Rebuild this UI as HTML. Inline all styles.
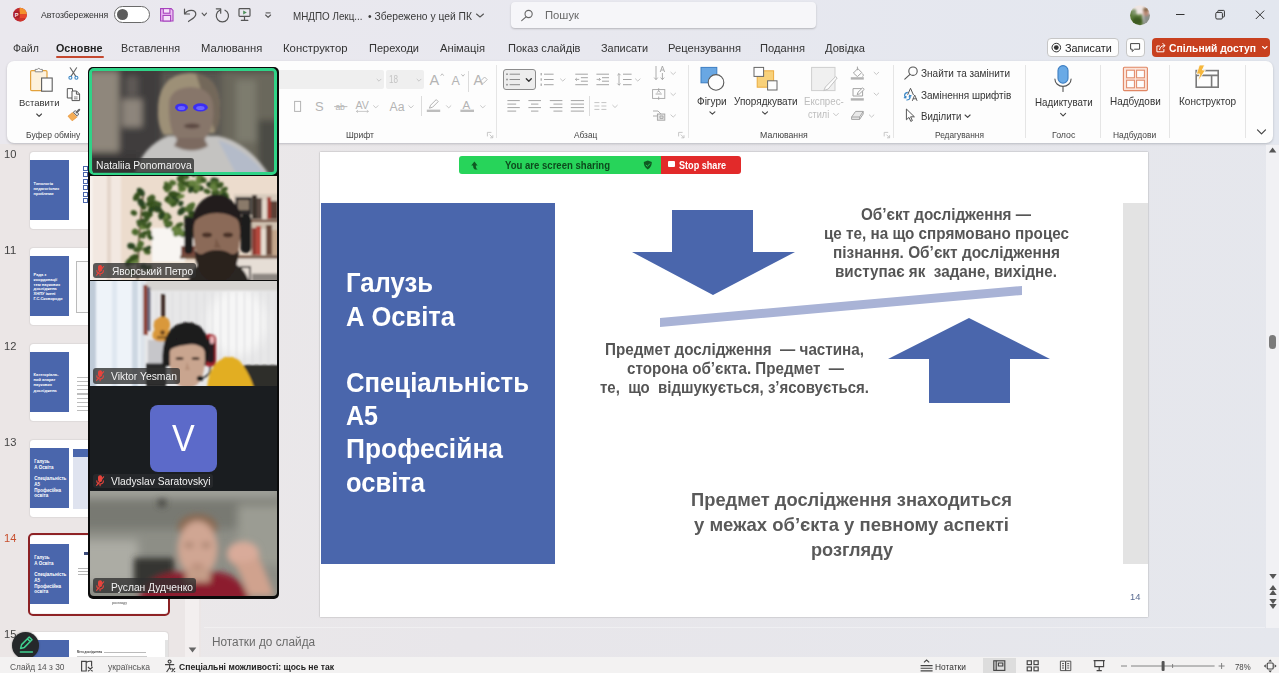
<!DOCTYPE html>
<html lang="uk"><head><meta charset="utf-8"><title>PowerPoint</title>
<style>
html,body{margin:0;padding:0}
body{width:1279px;height:673px;overflow:hidden;position:relative;background:#e9e8ee;font-family:"Liberation Sans",sans-serif}
.a{position:absolute}
.t{position:absolute;white-space:nowrap;transform-origin:0 50%;display:block}
svg{position:absolute;overflow:visible}
</style></head><body>

<div class="a" style="left:0px;top:0px;width:1279px;height:145px;background:linear-gradient(90deg,#eae8ee 0%,#e8e8ef 45%,#e3e7ef 100%);"></div>
<div class="a" style="left:0px;top:144px;width:204px;height:514px;background:#ebe6e6;"></div>
<div class="a" style="left:200.6px;top:144px;width:1078.4px;height:514px;background:linear-gradient(100deg,#ebe8e9 0%,#e8e6ea 30%,#e5e7ed 100%);"></div>
<div class="a" style="left:7.3px;top:60.7px;width:1265.8px;height:82.4px;background:#fdfdfd;border-radius:7px;box-shadow:0 1px 2.5px rgba(0,0,0,.2)"></div>
<span class="t" id="t0" style="left:40.6px;top:9.3px;font-size:9.5px;line-height:12px;color:#303030;font-weight:400;transform:scaleX(0.9180);">Автозбереження</span>
<div class="a" style="left:114px;top:6px;width:36px;height:17px;background:#fff;border:1px solid #6a6a6a;box-sizing:border-box;border-radius:9px"></div>
<div class="a" style="left:117px;top:9.3px;width:11.2px;height:11.2px;background:#5c5c5c;border-radius:50%"></div>
<span class="t" id="t1" style="left:292.5px;top:8.5px;font-size:10.5px;line-height:14px;color:#3a3a3a;font-weight:400;transform:scaleX(0.9370);">МНДПО Лекц...</span>
<span class="t" id="t2" style="left:368px;top:8.5px;font-size:10.5px;line-height:14px;color:#3a3a3a;font-weight:400;transform:scaleX(0.9811);">• Збережено у цей ПК</span>
<div class="a" style="left:510.5px;top:2px;width:305.5px;height:25.5px;background:#f6f6f9;border-radius:4px;box-shadow:0 1px 2px rgba(0,0,0,.22)"></div>
<span class="t" id="t3" style="left:545px;top:8px;font-size:11px;line-height:14px;color:#6a6a6a;font-weight:400;transform:scaleX(1.0250);">Пошук</span>
<svg style="left:0;top:0" width="1279" height="673" viewBox="0 0 1279 673"><defs><clipPath id="avc"><circle cx="1140" cy="15.2" r="10"/></clipPath><filter id="avb" x="-30%" y="-30%" width="160%" height="160%"><feGaussianBlur stdDeviation="1"/></filter></defs><g clip-path="url(#avc)"><rect x="1129" y="4" width="22" height="22" fill="#efe6e4"/><g filter="url(#avb)"><path d="M1129 12 q3 -4 5 0 q3 4 8 2 l2 14 h-15 z" fill="#5c7a3a"/><ellipse cx="1137" cy="21" rx="5" ry="4" fill="#3c5a22"/><ellipse cx="1134" cy="12" rx="2.4" ry="3" fill="#7f956a"/><rect x="1143.6" y="14" width="8" height="13" fill="#8b908a"/><ellipse cx="1146" cy="12.4" rx="2.8" ry="3.6" fill="#b98a76"/><ellipse cx="1146" cy="9.6" rx="3" ry="2" fill="#86684a"/></g></g></svg>
<span class="t" id="t4" style="left:13px;top:41.3px;font-size:11px;line-height:14px;color:#333;font-weight:400;transform:scaleX(0.9539);">Файл</span>
<span class="t" id="t5" style="left:56px;top:41.3px;font-size:11px;line-height:14px;color:#222;font-weight:700;transform:scaleX(0.9777);">Основне</span>
<span class="t" id="t6" style="left:121px;top:41.3px;font-size:11px;line-height:14px;color:#333;font-weight:400;transform:scaleX(0.9815);">Вставлення</span>
<span class="t" id="t7" style="left:200.6px;top:41.3px;font-size:11px;line-height:14px;color:#333;font-weight:400;transform:scaleX(1.0228);">Малювання</span>
<span class="t" id="t8" style="left:283px;top:41.3px;font-size:11px;line-height:14px;color:#333;font-weight:400;transform:scaleX(1.0284);">Конструктор</span>
<span class="t" id="t9" style="left:369px;top:41.3px;font-size:11px;line-height:14px;color:#333;font-weight:400;transform:scaleX(1.0031);">Переходи</span>
<span class="t" id="t10" style="left:440px;top:41.3px;font-size:11px;line-height:14px;color:#333;font-weight:400;transform:scaleX(1.0169);">Анімація</span>
<span class="t" id="t11" style="left:507.5px;top:41.3px;font-size:11px;line-height:14px;color:#333;font-weight:400;transform:scaleX(1.0061);">Показ слайдів</span>
<span class="t" id="t12" style="left:601px;top:41.3px;font-size:11px;line-height:14px;color:#333;font-weight:400;transform:scaleX(0.9911);">Записати</span>
<span class="t" id="t13" style="left:667.5px;top:41.3px;font-size:11px;line-height:14px;color:#333;font-weight:400;transform:scaleX(1.0179);">Рецензування</span>
<span class="t" id="t14" style="left:759.5px;top:41.3px;font-size:11px;line-height:14px;color:#333;font-weight:400;transform:scaleX(1.0127);">Подання</span>
<span class="t" id="t15" style="left:825px;top:41.3px;font-size:11px;line-height:14px;color:#333;font-weight:400;transform:scaleX(1.0107);">Довідка</span>
<div class="a" style="left:56px;top:56.3px;width:48px;height:1.8px;background:#c5482f;border-radius:1px"></div>
<div class="a" style="left:1047.2px;top:37.8px;width:71.4px;height:19.4px;background:#fdfdfd;border:1px solid #c6c6c6;box-sizing:border-box;border-radius:4px"></div>
<span class="t" id="t16" style="left:1065px;top:40.6px;font-size:11px;line-height:14px;color:#222;font-weight:400;transform:scaleX(0.9869);">Записати</span>
<div class="a" style="left:1125.6px;top:37.8px;width:19px;height:19.4px;background:#fdfdfd;border:1px solid #c6c6c6;box-sizing:border-box;border-radius:4px"></div>
<div class="a" style="left:1152px;top:37.8px;width:118.4px;height:19.4px;background:#c8401f;border-radius:4px"></div>
<span class="t" id="t17" style="left:1169px;top:40.6px;font-size:11px;line-height:14px;color:#fff;font-weight:700;transform:scaleX(0.9383);">Спільний доступ</span>
<span class="t" id="t18" style="left:19px;top:95.8px;font-size:9.8px;line-height:13px;color:#333;font-weight:400;transform:scaleX(0.9664);">Вставити</span>
<span class="t" id="t19" style="left:25.7px;top:129px;font-size:9px;line-height:12px;color:#444;font-weight:400;transform:scaleX(0.9418);">Буфер обміну</span>
<div class="a" style="left:279px;top:69.7px;width:104.5px;height:19.8px;background:#efefef;border-radius:0 2px 2px 0"></div>
<div class="a" style="left:385.7px;top:69.7px;width:38.1px;height:19.8px;background:#efefef;border-radius:2px"></div>
<span class="t" id="t20" style="left:389px;top:73.3px;font-size:10px;line-height:13px;color:#c4c4c4;font-weight:400;transform:scaleX(0.8090);">18</span>
<span class="t" id="t21" style="left:346px;top:129px;font-size:9px;line-height:12px;color:#444;font-weight:400;transform:scaleX(0.9451);">Шрифт</span>
<span class="t" id="t22" style="left:573.7px;top:129px;font-size:9px;line-height:12px;color:#444;font-weight:400;transform:scaleX(0.9228);">Абзац</span>
<span class="t" id="t23" style="left:697.4px;top:94.9px;font-size:10.2px;line-height:13px;color:#333;font-weight:400;transform:scaleX(0.9846);">Фігури</span>
<span class="t" id="t24" style="left:733.7px;top:94.9px;font-size:10.2px;line-height:13px;color:#333;font-weight:400;transform:scaleX(0.9787);">Упорядкувати</span>
<span class="t" id="t25" style="left:803.6px;top:94.9px;font-size:10.2px;line-height:13px;color:#bdbdbd;font-weight:400;transform:scaleX(0.9498);">Експрес-</span>
<span class="t" id="t26" style="left:807.8px;top:108.4px;font-size:10.2px;line-height:13px;color:#bdbdbd;font-weight:400;transform:scaleX(0.8956);">стилі</span>
<span class="t" id="t27" style="left:760px;top:129px;font-size:9px;line-height:12px;color:#444;font-weight:400;transform:scaleX(0.9733);">Малювання</span>
<span class="t" id="t28" style="left:920.6px;top:67.1px;font-size:10.2px;line-height:13px;color:#333;font-weight:400;transform:scaleX(0.9817);">Знайти та замінити</span>
<span class="t" id="t29" style="left:920.6px;top:88.6px;font-size:10.2px;line-height:13px;color:#333;font-weight:400;transform:scaleX(0.9803);">Замінення шрифтів</span>
<span class="t" id="t30" style="left:920.6px;top:109.5px;font-size:10.2px;line-height:13px;color:#333;font-weight:400;transform:scaleX(0.9464);">Виділити</span>
<span class="t" id="t31" style="left:934.8px;top:129.3px;font-size:9px;line-height:12px;color:#444;font-weight:400;transform:scaleX(0.9232);">Редагування</span>
<span class="t" id="t32" style="left:1034.7px;top:95.5px;font-size:10.2px;line-height:13px;color:#333;font-weight:400;transform:scaleX(0.9584);">Надиктувати</span>
<span class="t" id="t33" style="left:1051.5px;top:129.3px;font-size:9px;line-height:12px;color:#444;font-weight:400;transform:scaleX(0.9775);">Голос</span>
<span class="t" id="t34" style="left:1110.3px;top:94.7px;font-size:10.2px;line-height:13px;color:#333;font-weight:400;transform:scaleX(0.9741);">Надбудови</span>
<span class="t" id="t35" style="left:1112.9px;top:129.3px;font-size:9px;line-height:12px;color:#444;font-weight:400;transform:scaleX(0.9373);">Надбудови</span>
<span class="t" id="t36" style="left:1179px;top:94.5px;font-size:10.2px;line-height:13px;color:#333;font-weight:400;transform:scaleX(0.9846);">Конструктор</span>
<div class="a" style="left:495.8px;top:65px;width:1px;height:73px;background:#e5e5e5;"></div>
<div class="a" style="left:688px;top:65px;width:1px;height:73px;background:#e5e5e5;"></div>
<div class="a" style="left:892.9px;top:65px;width:1px;height:73px;background:#e5e5e5;"></div>
<div class="a" style="left:1025px;top:65px;width:1px;height:73px;background:#e5e5e5;"></div>
<div class="a" style="left:1100px;top:65px;width:1px;height:73px;background:#e5e5e5;"></div>
<div class="a" style="left:1169.2px;top:65px;width:1px;height:73px;background:#e5e5e5;"></div>
<div class="a" style="left:1245px;top:65px;width:1px;height:73px;background:#e5e5e5;"></div>
<div class="a" style="left:467.9px;top:70.6px;width:1px;height:21.4px;background:#dcdcdc;"></div>
<div class="a" style="left:420.8px;top:96px;width:1px;height:20px;background:#dcdcdc;"></div>
<div class="a" style="left:588.5px;top:96.3px;width:1px;height:19.5px;background:#dcdcdc;"></div>
<div class="a" style="left:503px;top:69.3px;width:33px;height:20.4px;background:#ededed;border:1px solid #8c8c8c;box-sizing:border-box;border-radius:3px"></div>
<svg style="left:0;top:0" width="1279" height="673" viewBox="0 0 1279 673" font-family="Liberation Sans, sans-serif">
<defs><clipPath id="ppc"><circle cx="20" cy="14.7" r="6.9"/></clipPath></defs>
<g clip-path="url(#ppc)"><rect x="12" y="7" width="16" height="16" fill="#bd2830"/><rect x="19.6" y="7" width="9" height="7.4" fill="#f4922c"/><rect x="19.6" y="14.4" width="9" height="4" fill="#e8482b"/><rect x="19.6" y="18.4" width="9" height="4" fill="#d0352a"/></g>
<rect x="13.6" y="11.6" width="6" height="6.2" rx="1" fill="#a81f2a"/><text x="14.8" y="16.8" font-size="5.6" font-weight="700" fill="#ffe6e6">P</text>
<g fill="#ecc0f3" stroke="#a640bd" stroke-width="1.1"><path d="M160.6 8.6 h10.6 l1.8 1.8 v10.6 h-12.4 z"/><rect x="163.3" y="8.6" width="6.6" height="4.6" fill="#f6e4fa"/><rect x="163" y="15.4" width="7.6" height="5.6" fill="#f6e4fa"/></g>
<g fill="none" stroke="#555" stroke-width="1.2" stroke-linecap="round" stroke-linejoin="round"><path d="M184.5 9 v5 h5"/><path d="M185 13.6 C187.5 9.2 195.8 9 195.8 14.2 C195.8 17.2 192 19 188.5 21.5"/>
<path d="M216.3 8.8 h4.4 v4.4"/><path d="M219.8 10.2 A6.1 6.1 0 1 0 225 10.2"/>
<rect x="239" y="8.6" width="11" height="7.8" rx=".8"/><path d="M244.5 16.6 v3.4 M241.3 20.3 h6.6"/></g>
<path d="M243.2 10.4 l3.6 2.1 l-3.6 2.1 z" fill="#4f8f5b"/>
<polyline points="202.1,13.2 204.3,15.6 206.5,13.2" fill="none" stroke="#555" stroke-width="1.1" stroke-linecap="round" stroke-linejoin="round"/>
<line x1="265.6" y1="12.9" x2="270.6" y2="12.9" stroke="#555" stroke-width="1.1"/>
<polyline points="265.6,15 268.1,17.4 270.6,15" fill="none" stroke="#555" stroke-width="1.1" stroke-linecap="round" stroke-linejoin="round"/>
<polyline points="476.5,14 480,17 483.5,14" fill="none" stroke="#555" stroke-width="1.1" stroke-linecap="round" stroke-linejoin="round"/>
<g fill="none" stroke="#666" stroke-width="1.1" stroke-linecap="round"><circle cx="528.6" cy="14" r="3.6"/><path d="M526 16.8 l-4.3 3.8"/></g>
<g fill="none" stroke="#333" stroke-width="1"><path d="M1176 14.5 h8.5"/><rect x="1215.8" y="12.4" width="6.6" height="6.6" rx="1.2"/><path d="M1217.8 12.2 v-1 q0 -.8 .8 -.8 h5 q.8 0 .8 .8 v5 q0 .8 -.8 .8 h-1"/><path d="M1255.8 10.6 l8.4 8.4 M1264.2 10.6 l-8.4 8.4"/></g>
<circle cx="1056.3" cy="47.6" r="4.3" fill="none" stroke="#333" stroke-width="1"/><circle cx="1056.3" cy="47.6" r="2.4" fill="#333"/>
<path d="M1130.6 43.6 h9 v5.6 h-5 l-2.4 2.3 v-2.3 h-1.6 z" fill="none" stroke="#444" stroke-width="1" stroke-linejoin="round"/>
<g fill="none" stroke="#fff" stroke-width="1" stroke-linecap="round" stroke-linejoin="round"><path d="M1159.5 46 h-2.6 v5.8 h7 v-2.3"/><path d="M1159.6 49.6 c.2 -2.8 2 -4 5 -4 M1162.8 43.4 l2.2 2.2 l-2.2 2.2"/></g>
<polyline points="1262.6,46.5 1264.8,48.7 1267,46.5" fill="none" stroke="#fff" stroke-width="1.1" stroke-linecap="round" stroke-linejoin="round"/>
<rect x="30.6" y="70.6" width="16.4" height="20" rx="1.2" fill="#fdf1dc" stroke="#e3a23c" stroke-width="1.2"/>
<path d="M35.2 71.8 v-2.4 h2 q1.6 -2.2 3.2 0 h2 v2.4 z" fill="#fff" stroke="#8a8a8a" stroke-width="1"/>
<rect x="41.6" y="78" width="10.6" height="13.2" fill="#fdfdfd" stroke="#5c5c5c" stroke-width="1.1"/>
<polyline points="36.7,114 39.1,116.4 41.5,114" fill="none" stroke="#444" stroke-width="1.1" stroke-linecap="round" stroke-linejoin="round"/>
<g fill="none" stroke-linecap="round"><path d="M70.2 67.8 l5.6 8.6 M76.6 67.8 l-5.6 8.6" stroke="#666" stroke-width="1.1"/><circle cx="70.4" cy="77.7" r="1.5" stroke="#3b87c6" stroke-width="1.1"/><circle cx="76.4" cy="77.7" r="1.5" stroke="#3b87c6" stroke-width="1.1"/></g>
<g fill="#fdfdfd" stroke="#555" stroke-width="1" stroke-linejoin="round"><path d="M67.3 88.6 h5.2 v9.4 h-5.2 z"/><path d="M72 91 h4.6 l3 3 v6.6 h-7.6 z"/><path d="M76.4 91.2 v3 h3" fill="none"/><path d="M74 97 h3.6 M74 98.8 h3.6" stroke-width=".7"/></g>
<path d="M68 116.2 l4.4 -3.6 l4.4 4.6 l-4.6 3.6 z" fill="#f4ad55" stroke="#e8963a" stroke-width=".8"/><path d="M73.2 112.2 l2.2 -1.6 l3.4 3.4 l-1.6 2.2 z" fill="#ddd" stroke="#666" stroke-width=".9"/><path d="M76.8 112.2 l2.4 -2.4" stroke="#666" stroke-width="2" stroke-linecap="round"/>
<polyline points="377,79.2 379,81.2 381,79.2" fill="none" stroke="#c8c8c8" stroke-width="1" stroke-linecap="round" stroke-linejoin="round"/>
<polyline points="417,79.2 419,81.2 421,79.2" fill="none" stroke="#c8c8c8" stroke-width="1" stroke-linecap="round" stroke-linejoin="round"/>
<g fill="#b4b4b4"><text x="429.4" y="84.8" font-size="14.5">A</text><text x="451.6" y="84.8" font-size="12.5">A</text><text x="473.6" y="84.6" font-size="14">A</text>
<text x="315" y="110.9" font-size="13">S</text><text x="335.4" y="109.8" font-size="8.5">ab</text><text x="355.4" y="108.6" font-size="10.5" textLength="13.4" lengthAdjust="spacingAndGlyphs">AV</text><text x="389.6" y="110.8" font-size="12.5" textLength="15" lengthAdjust="spacingAndGlyphs">Aa</text><text x="462.6" y="108.6" font-size="11.5">A</text></g>
<polyline points="440.9,75.4 442.2,73.8 443.5,75.4" fill="none" stroke="#b4b4b4" stroke-width="0.9" stroke-linecap="round" stroke-linejoin="round"/>
<polyline points="461.7,74.6 463,76.2 464.3,74.6" fill="none" stroke="#b4b4b4" stroke-width="0.9" stroke-linecap="round" stroke-linejoin="round"/>
<path d="M481 80.6 l3.6 -3.6 l2.6 2.6 l-3.6 3.6 h-2 z" fill="#fdfdfd" stroke="#b4b4b4" stroke-width=".9"/>
<rect x="294.6" y="101.4" width="6" height="10" fill="none" stroke="#b4b4b4" stroke-width="1"/>
<line x1="334.2" y1="106.6" x2="347.4" y2="106.6" stroke="#b4b4b4" stroke-width="0.9"/>
<path d="M356.4 111.4 h12 m-1.6 -1.2 l1.6 1.2 l-1.6 1.2 M358 110.2 l-1.6 1.2 l1.6 1.2" fill="none" stroke="#b4b4b4" stroke-width=".7"/>
<path d="M429.4 108.2 l1.2 -3 l5.6 -5.6 l2 2 l-5.6 5.6 z" fill="none" stroke="#b4b4b4" stroke-width="1" stroke-linejoin="round"/><rect x="426.8" y="109.6" width="13.4" height="2.4" fill="#bdbdbd"/>
<rect x="460.4" y="109.6" width="13.6" height="2.4" fill="#bdbdbd"/>
<polyline points="373.6,105.7 375.8,107.9 378,105.7" fill="none" stroke="#c8c8c8" stroke-width="1" stroke-linecap="round" stroke-linejoin="round"/>
<polyline points="408.8,105.7 411,107.9 413.2,105.7" fill="none" stroke="#c8c8c8" stroke-width="1" stroke-linecap="round" stroke-linejoin="round"/>
<polyline points="446.5,105.7 448.7,107.9 450.9,105.7" fill="none" stroke="#c8c8c8" stroke-width="1" stroke-linecap="round" stroke-linejoin="round"/>
<polyline points="480.6,105.7 482.8,107.9 485,105.7" fill="none" stroke="#c8c8c8" stroke-width="1" stroke-linecap="round" stroke-linejoin="round"/>
<path d="M487.4 136.4 v-4 h4 M489.6 134.6 l3.2 3.2 m0 -2.6 v2.6 h-2.6" fill="none" stroke="#c2c2c2" stroke-width="0.9"/>
<path d="M678.6 136.4 v-4 h4 M680.8 134.6 l3.2 3.2 m0 -2.6 v2.6 h-2.6" fill="none" stroke="#c2c2c2" stroke-width="0.9"/>
<path d="M884.2 136.4 v-4 h4 M886.4 134.6 l3.2 3.2 m0 -2.6 v2.6 h-2.6" fill="none" stroke="#c2c2c2" stroke-width="0.9"/>
<line x1="509.6" y1="74.2" x2="520" y2="74.2" stroke="#8c8c8c" stroke-width="1"/>
<rect x="506.2" y="73.4" width="1.6" height="1.6" fill="#8c8c8c"/>
<line x1="544" y1="74.2" x2="553.6" y2="74.2" stroke="#a4a4a4" stroke-width="1"/>
<rect x="540.6" y="73" width="1.2" height="2.4" fill="#a4a4a4"/>
<line x1="509.6" y1="79.5" x2="520" y2="79.5" stroke="#8c8c8c" stroke-width="1"/>
<rect x="506.2" y="78.7" width="1.6" height="1.6" fill="#8c8c8c"/>
<line x1="544" y1="79.5" x2="553.6" y2="79.5" stroke="#a4a4a4" stroke-width="1"/>
<rect x="540.6" y="78.3" width="1.2" height="2.4" fill="#a4a4a4"/>
<line x1="509.6" y1="84.7" x2="520" y2="84.7" stroke="#8c8c8c" stroke-width="1"/>
<rect x="506.2" y="83.9" width="1.6" height="1.6" fill="#8c8c8c"/>
<line x1="544" y1="84.7" x2="553.6" y2="84.7" stroke="#a4a4a4" stroke-width="1"/>
<rect x="540.6" y="83.5" width="1.2" height="2.4" fill="#a4a4a4"/>
<polyline points="526.3,78.7 528.8,81.3 531.3,78.7" fill="none" stroke="#333" stroke-width="1.3" stroke-linecap="round" stroke-linejoin="round"/>
<polyline points="560.5,78.9 562.8,81.1 565.1,78.9" fill="none" stroke="#c8c8c8" stroke-width="1" stroke-linecap="round" stroke-linejoin="round"/>
<line x1="575.3" y1="74.2" x2="587.9" y2="74.2" stroke="#a4a4a4" stroke-width="1"/>
<line x1="575.3" y1="84.7" x2="587.9" y2="84.7" stroke="#a4a4a4" stroke-width="1"/>
<line x1="580.9" y1="77.7" x2="587.9" y2="77.7" stroke="#a4a4a4" stroke-width="1"/>
<line x1="580.9" y1="81.2" x2="587.9" y2="81.2" stroke="#a4a4a4" stroke-width="1"/>
<line x1="596.4" y1="74.2" x2="609" y2="74.2" stroke="#a4a4a4" stroke-width="1"/>
<line x1="596.4" y1="84.7" x2="609" y2="84.7" stroke="#a4a4a4" stroke-width="1"/>
<line x1="602" y1="77.7" x2="609" y2="77.7" stroke="#a4a4a4" stroke-width="1"/>
<line x1="602" y1="81.2" x2="609" y2="81.2" stroke="#a4a4a4" stroke-width="1"/>
<path d="M579.2 79.4 h-3.8 m1.4 -1.4 l-1.4 1.4 l1.4 1.4 M596.6 79.4 h3.8 m-1.4 -1.4 l1.4 1.4 l-1.4 1.4" fill="none" stroke="#a4a4a4" stroke-width=".9"/>
<line x1="623" y1="74.2" x2="631.6" y2="74.2" stroke="#a4a4a4" stroke-width="1"/>
<line x1="623" y1="79.5" x2="631.6" y2="79.5" stroke="#a4a4a4" stroke-width="1"/>
<line x1="623" y1="84.7" x2="631.6" y2="84.7" stroke="#a4a4a4" stroke-width="1"/>
<path d="M619 73.6 v11.6 m-1.6 -10 l1.6 -1.6 l1.6 1.6 m-3.2 8.4 l1.6 1.6 l1.6 -1.6" fill="none" stroke="#a4a4a4" stroke-width=".9"/>
<polyline points="635.5,78.9 637.8,81.1 640.1,78.9" fill="none" stroke="#c8c8c8" stroke-width="1" stroke-linecap="round" stroke-linejoin="round"/>
<line x1="507.4" y1="100.6" x2="519.8" y2="100.6" stroke="#a4a4a4" stroke-width="1"/>
<line x1="528.4" y1="100.6" x2="541" y2="100.6" stroke="#a4a4a4" stroke-width="1"/>
<line x1="549.8" y1="100.6" x2="562.4" y2="100.6" stroke="#a4a4a4" stroke-width="1"/>
<line x1="570.8" y1="100.6" x2="584" y2="100.6" stroke="#a4a4a4" stroke-width="1"/>
<line x1="507.4" y1="104.1" x2="516.16" y2="104.1" stroke="#a4a4a4" stroke-width="1"/>
<line x1="531" y1="104.1" x2="538.4" y2="104.1" stroke="#a4a4a4" stroke-width="1"/>
<line x1="553.44" y1="104.1" x2="562.4" y2="104.1" stroke="#a4a4a4" stroke-width="1"/>
<line x1="570.8" y1="104.1" x2="584" y2="104.1" stroke="#a4a4a4" stroke-width="1"/>
<line x1="507.4" y1="107.6" x2="519.8" y2="107.6" stroke="#a4a4a4" stroke-width="1"/>
<line x1="528.4" y1="107.6" x2="541" y2="107.6" stroke="#a4a4a4" stroke-width="1"/>
<line x1="549.8" y1="107.6" x2="562.4" y2="107.6" stroke="#a4a4a4" stroke-width="1"/>
<line x1="570.8" y1="107.6" x2="584" y2="107.6" stroke="#a4a4a4" stroke-width="1"/>
<line x1="507.4" y1="111.1" x2="516.16" y2="111.1" stroke="#a4a4a4" stroke-width="1"/>
<line x1="531" y1="111.1" x2="538.4" y2="111.1" stroke="#a4a4a4" stroke-width="1"/>
<line x1="553.44" y1="111.1" x2="562.4" y2="111.1" stroke="#a4a4a4" stroke-width="1"/>
<line x1="570.8" y1="111.1" x2="584" y2="111.1" stroke="#a4a4a4" stroke-width="1"/>
<line x1="594.4" y1="102.6" x2="599.4" y2="102.6" stroke="#c4c4c4" stroke-width="1"/>
<line x1="601.4" y1="102.6" x2="606.4" y2="102.6" stroke="#c4c4c4" stroke-width="1"/>
<line x1="594.4" y1="106" x2="599.4" y2="106" stroke="#c4c4c4" stroke-width="1"/>
<line x1="601.4" y1="106" x2="606.4" y2="106" stroke="#c4c4c4" stroke-width="1"/>
<line x1="594.4" y1="109.4" x2="599.4" y2="109.4" stroke="#c4c4c4" stroke-width="1"/>
<line x1="601.4" y1="109.4" x2="606.4" y2="109.4" stroke="#c4c4c4" stroke-width="1"/>
<polyline points="612.7,105.3 615,107.5 617.3,105.3" fill="none" stroke="#c8c8c8" stroke-width="1" stroke-linecap="round" stroke-linejoin="round"/>
<g fill="none" stroke="#a4a4a4" stroke-width=".9"><path d="M656 66 v13.6 m-1.8 -2 l1.8 2 l1.8 -2 M662.4 73 v6.6 m-1.8 -2 l1.8 2 l1.8 -2 M660.2 72 l2.2 -6 l2.2 6 m-3.6 -2 h2.8"/>
<rect x="652.6" y="89.6" width="12.2" height="8.8"/><path d="M658.7 88.2 v3 M658.7 96.6 v3.2 M655.6 94 h6.2 M656.8 92.6 l1.9 -1.6 l1.9 1.6"/>
<path d="M653 111 h5 l3 3 M653 116 h4 l1.6 -1"/><rect x="657.4" y="114" width="7.4" height="6.2" fill="#e6e6e6"/><path d="M660 116 h3 v2.4 h-3 z"/></g>
<polyline points="670.9,72.3 673.2,74.5 675.5,72.3" fill="none" stroke="#c8c8c8" stroke-width="1" stroke-linecap="round" stroke-linejoin="round"/>
<polyline points="670.9,93.3 673.2,95.5 675.5,93.3" fill="none" stroke="#c8c8c8" stroke-width="1" stroke-linecap="round" stroke-linejoin="round"/>
<polyline points="670.9,114.9 673.2,117.1 675.5,114.9" fill="none" stroke="#c8c8c8" stroke-width="1" stroke-linecap="round" stroke-linejoin="round"/>
<rect x="701" y="67.4" width="15.8" height="15.4" fill="#69a7e3" stroke="#3d7ec2" stroke-width="1"/><circle cx="716" cy="82.4" r="7.8" fill="#fdfdfd" stroke="#5a5a5a" stroke-width="1.1"/>
<polyline points="709.9,111.8 712.4,114.2 714.9,111.8" fill="none" stroke="#444" stroke-width="1.1" stroke-linecap="round" stroke-linejoin="round"/>
<rect x="757.2" y="70.8" width="16.4" height="16.4" fill="#f8d17a" stroke="#ecab3e" stroke-width="1"/><rect x="754" y="67.4" width="9.6" height="9" fill="#fdfdfd" stroke="#666" stroke-width="1"/><rect x="767.6" y="80.8" width="9.4" height="9.2" fill="#fdfdfd" stroke="#666" stroke-width="1"/>
<polyline points="762.5,111.8 765,114.2 767.5,111.8" fill="none" stroke="#444" stroke-width="1.1" stroke-linecap="round" stroke-linejoin="round"/>
<rect x="811.6" y="67.4" width="23.4" height="23.2" fill="#f0f0f0" stroke="#cfcfcf" stroke-width="1"/><path d="M835.6 76.6 l1.6 1.4 l-9 11 l-4.4 1.6 l1.6 -3.6 z" fill="#fdfdfd" stroke="#c2c2c2" stroke-width="1" stroke-linejoin="round"/>
<polyline points="833.6,113.4 836,115.8 838.4,113.4" fill="none" stroke="#c8c8c8" stroke-width="1" stroke-linecap="round" stroke-linejoin="round"/>
<g fill="none" stroke="#a4a4a4" stroke-width="1" stroke-linejoin="round"><path d="M853.4 73 l4.4 -4.4 l4 4 l-4.4 4 z M857.4 66.6 v3.6 M862.6 73.6 q1.6 2 0 3"/>
<rect x="853" y="88.6" width="9.6" height="7.4"/><path d="M857.2 94.6 l.8 -2.4 l4.6 -4.4 l1.6 1.6 l-4.6 4.4 z" fill="#fdfdfd"/>
<path d="M851.6 117 l4 -5.6 h7.6 l-3.6 5.6 z M851.6 117 v2.4 h8 v-2.4 M859.6 119.4 l3.6 -5.4 v-2.6" fill="#e9e9e9"/></g>
<rect x="850.8" y="77.2" width="13" height="2.4" fill="#b2b2b2"/><rect x="850.8" y="98.2" width="13" height="2.4" fill="#b2b2b2"/>
<polyline points="874.1,72.3 876.4,74.5 878.7,72.3" fill="none" stroke="#c8c8c8" stroke-width="1" stroke-linecap="round" stroke-linejoin="round"/>
<polyline points="874.1,93.1 876.4,95.3 878.7,93.1" fill="none" stroke="#c8c8c8" stroke-width="1" stroke-linecap="round" stroke-linejoin="round"/>
<polyline points="869.3,114.9 871.6,117.1 873.9,114.9" fill="none" stroke="#c8c8c8" stroke-width="1" stroke-linecap="round" stroke-linejoin="round"/>
<g fill="none" stroke="#555" stroke-width="1.1" stroke-linecap="round" stroke-linejoin="round"><circle cx="913" cy="71.2" r="4.2"/><path d="M910 74.4 l-5.2 4.8"/>
<path d="M907.8 94.4 L910.5 88.3 L913.3 94.6" stroke-width="1"/><path d="M912.4 100.6 l2.3 -5.6 l2.3 5.6 m-3.8 -1.8 h3" stroke-width=".9"/><path d="M906.4 109.4 v10.4 l2.6 -2.4 l1.8 4 l1.6 -.8 l-1.8 -3.8 h3.4 z" stroke-width="1"/></g>
<g fill="none" stroke="#3b87c6" stroke-width="1.1" stroke-linecap="round"><path d="M907.4 92.4 q-2.8 .6 -2.8 3.2 q0 1.4 1.2 2.4 m-1.6 -.2 l1.6 .2 l.2 -1.6"/><path d="M906.8 100 q2.8 0 3.4 -2.6 q.2 -1.2 -.6 -2 m1.6 .4 l-1.6 -.4 l-.4 1.6"/></g>
<polyline points="965.1,115 967.6,117.4 970.1,115" fill="none" stroke="#444" stroke-width="1.1" stroke-linecap="round" stroke-linejoin="round"/>
<rect x="1058" y="65.6" width="10" height="17.6" rx="5" fill="#6aaae6" stroke="#3d7ec2" stroke-width="1.1"/><path d="M1054.9 79 a8.1 7.4 0 0 0 16.2 0 M1063 86.6 v4.8" fill="none" stroke="#555" stroke-width="1.1" stroke-linecap="round"/>
<polyline points="1060.6,113.4 1063.1,115.8 1065.6,113.4" fill="none" stroke="#444" stroke-width="1.1" stroke-linecap="round" stroke-linejoin="round"/>
<rect x="1123.4" y="67.2" width="24" height="23.4" rx="1" fill="#fbe3d8" stroke="#e08664" stroke-width="1.1"/>
<rect x="1126.6" y="70.2" width="7.8" height="7.6" fill="#fdfdfd" stroke="#e08664" stroke-width="1"/>
<rect x="1136.6" y="70.2" width="7.8" height="7.6" fill="#fdfdfd" stroke="#e08664" stroke-width="1"/>
<rect x="1126.6" y="80.2" width="7.8" height="7.6" fill="#fdfdfd" stroke="#e08664" stroke-width="1"/>
<rect x="1136.6" y="80.2" width="7.8" height="7.6" fill="#fdfdfd" stroke="#e08664" stroke-width="1"/>
<g fill="none" stroke="#7a7a7a" stroke-width="1.6"><rect x="1196.2" y="70.6" width="22" height="16.6"/><path d="M1196.2 75.4 h22 M1211.6 75.4 v11.8"/></g>
<path d="M1199.4 65 h5.2 l-2.2 5 h3 l-7.4 11.6 l1.8 -7.6 h-3.4 z" fill="#f6b73c" stroke="#fdfdfd" stroke-width=".8"/>
<polyline points="1257.5,129.8 1261.5,133.8 1265.5,129.8" fill="none" stroke="#444" stroke-width="1.2" stroke-linecap="round" stroke-linejoin="round"/>
</svg>
<div class="a" style="left:320.4px;top:151.5px;width:828px;height:465.4px;background:#ffffff;box-shadow:0 0 1.5px rgba(0,0,0,.35)"></div>
<div class="a" style="left:320.8px;top:202.5px;width:233.8px;height:361.3px;background:#4a66ac;"></div>
<div class="a" style="left:1123.3px;top:202.5px;width:25px;height:361.3px;background:#e3e3e3;"></div>
<svg style="left:0;top:0" width="1279" height="673" viewBox="0 0 1279 673">
<polygon points="672,210 753,210 753,252 795,252 713,295 632,252 672,252" fill="#4a66ac"/>
<polygon points="969,318 1050,359 1010,359 1010,403 929,403 929,359 888,359" fill="#4a66ac"/>
<polygon points="660,318 1022,286 1022,295 660,327" fill="#a9b3d6"/>
</svg>
<span class="t" id="t37" style="left:346px;top:264.4px;font-size:28.5px;line-height:37px;color:#fff;font-weight:700;transform:scaleX(0.9013);">Галузь</span>
<span class="t" id="t38" style="left:346px;top:297.6px;font-size:28.5px;line-height:37px;color:#fff;font-weight:700;transform:scaleX(0.8952);">А Освіта</span>
<span class="t" id="t39" style="left:346px;top:364px;font-size:28.5px;line-height:37px;color:#fff;font-weight:700;transform:scaleX(0.9013);">Спеціальність</span>
<span class="t" id="t40" style="left:346px;top:397.2px;font-size:28.5px;line-height:37px;color:#fff;font-weight:700;transform:scaleX(0.8782);">А5</span>
<span class="t" id="t41" style="left:346px;top:430.4px;font-size:28.5px;line-height:37px;color:#fff;font-weight:700;transform:scaleX(0.9251);">Професійна</span>
<span class="t" id="t42" style="left:346px;top:463.6px;font-size:28.5px;line-height:37px;color:#fff;font-weight:700;transform:scaleX(0.8963);">освіта</span>
<span class="t" id="t43" style="left:861px;top:203.5px;font-size:16px;line-height:21px;color:#555;font-weight:700;transform:scaleX(0.9528);">Об’єкт дослідження —</span>
<span class="t" id="t44" style="left:824px;top:222.5px;font-size:16px;line-height:21px;color:#555;font-weight:700;transform:scaleX(0.9525);">це те, на що спрямовано процес</span>
<span class="t" id="t45" style="left:833px;top:241.5px;font-size:16px;line-height:21px;color:#555;font-weight:700;transform:scaleX(0.9612);">пізнання. Об’єкт дослідження</span>
<span class="t" id="t46" style="left:835px;top:260.5px;font-size:16px;line-height:21px;color:#555;font-weight:700;transform:scaleX(0.9523);">виступає як&nbsp; задане, вихідне.</span>
<span class="t" id="t47" style="left:605px;top:338.5px;font-size:16px;line-height:21px;color:#555;font-weight:700;transform:scaleX(0.9511);">Предмет дослідження&nbsp; — частина,</span>
<span class="t" id="t48" style="left:627px;top:357.5px;font-size:16px;line-height:21px;color:#555;font-weight:700;transform:scaleX(0.9476);">сторона об’єкта. Предмет&nbsp; —</span>
<span class="t" id="t49" style="left:600px;top:376.5px;font-size:16px;line-height:21px;color:#555;font-weight:700;transform:scaleX(0.9367);">те,&nbsp; що&nbsp; відшукується, з’ясовується.</span>
<span class="t" id="t50" style="left:691px;top:486.5px;font-size:19px;line-height:25px;color:#595959;font-weight:700;transform:scaleX(0.9649);">Предмет дослідження знаходиться</span>
<span class="t" id="t51" style="left:694px;top:511.5px;font-size:19px;line-height:25px;color:#595959;font-weight:700;transform:scaleX(0.9739);">у межах об’єкта у певному аспекті</span>
<span class="t" id="t52" style="left:811px;top:536.5px;font-size:19px;line-height:25px;color:#595959;font-weight:700;transform:scaleX(0.9549);">розгляду</span>
<span class="t" id="t53" style="left:1129.6px;top:591.3px;font-size:9px;line-height:12px;color:#586a90;font-weight:400;transform:scaleX(1.0384);">14</span>
<div class="a" style="left:459px;top:155.8px;width:203px;height:18.5px;background:#27d45a;border-radius:3px 0 0 3px"></div>
<div class="a" style="left:661.4px;top:155.8px;width:79.8px;height:18.5px;background:#e22a2a;border-radius:0 3px 3px 0"></div>
<span class="t" id="t54" style="left:505px;top:158.7px;font-size:10px;line-height:13px;color:#0d4a1d;font-weight:700;transform:scaleX(0.9558);">You are screen sharing</span>
<span class="t" id="t55" style="left:679px;top:158.7px;font-size:10px;line-height:13px;color:#fff;font-weight:700;transform:scaleX(0.9093);">Stop share</span>
<div class="a" style="left:668.3px;top:161px;width:7px;height:6.4px;background:#fff;border-radius:1px"></div>
<svg style="left:0;top:0" width="1279" height="673" viewBox="0 0 1279 673"><path d="M471.2 165.4 l3.2 -4 l3.2 4 h-1.8 q0 3.4 2.4 4.2 h-3.4 q-1.8 -1.4 -1.8 -4.2 z" fill="#0f5a22"/><path d="M643.8 162 l4 -1.6 l4 1.6 q.2 5 -4 7.4 q-4.2 -2.4 -4 -7.4 z" fill="#0f5a22"/><path d="M645.8 164.8 l1.6 1.6 l2.6 -2.8" fill="none" stroke="#27d45a" stroke-width=".9"/></svg>
<div class="a" style="left:185.3px;top:144px;width:14.2px;height:513px;background:#f3efef;"></div>
<span class="t" id="t56" style="left:4px;top:147.2px;font-size:11.5px;line-height:15px;color:#444;font-weight:400;transform:scaleX(0.9690);">10</span>
<div class="a" style="left:30px;top:151.7px;width:138px;height:77.6px;background:#fff;border-radius:3px;box-shadow:0 0 1.5px rgba(0,0,0,.25)"></div>
<div class="a" style="left:30px;top:160.15px;width:39px;height:59.8px;background:#4a66ac;"></div>
<span class="t" id="t57" style="left:4px;top:243.2px;font-size:11.5px;line-height:15px;color:#444;font-weight:400;transform:scaleX(1.0374);">11</span>
<div class="a" style="left:30px;top:247.7px;width:138px;height:77.6px;background:#fff;border-radius:3px;box-shadow:0 0 1.5px rgba(0,0,0,.25)"></div>
<div class="a" style="left:30px;top:256.15px;width:39px;height:59.8px;background:#4a66ac;"></div>
<span class="t" id="t58" style="left:4px;top:339.2px;font-size:11.5px;line-height:15px;color:#444;font-weight:400;transform:scaleX(0.9690);">12</span>
<div class="a" style="left:30px;top:343.7px;width:138px;height:77.6px;background:#fff;border-radius:3px;box-shadow:0 0 1.5px rgba(0,0,0,.25)"></div>
<div class="a" style="left:30px;top:352.15px;width:39px;height:59.8px;background:#4a66ac;"></div>
<span class="t" id="t59" style="left:4px;top:435.2px;font-size:11.5px;line-height:15px;color:#444;font-weight:400;transform:scaleX(0.9690);">13</span>
<div class="a" style="left:30px;top:439.7px;width:138px;height:77.6px;background:#fff;border-radius:3px;box-shadow:0 0 1.5px rgba(0,0,0,.25)"></div>
<div class="a" style="left:30px;top:448.15px;width:39px;height:59.8px;background:#4a66ac;"></div>
<span class="t" id="t60" style="left:4px;top:531.2px;font-size:11.5px;line-height:15px;color:#c8502f;font-weight:400;transform:scaleX(0.9690);">14</span>
<div class="a" style="left:27.6px;top:533.2px;width:142.6px;height:82.6px;background:#fff;border:2.2px solid #8f2326;box-sizing:border-box;border-radius:5px"></div>
<div class="a" style="left:30px;top:535.7px;width:138px;height:77.6px;background:#fff;border-radius:3px;box-shadow:0 0 1.5px rgba(0,0,0,.25)"></div>
<div class="a" style="left:30px;top:544.15px;width:39px;height:59.8px;background:#4a66ac;"></div>
<span class="t" id="t61" style="left:4px;top:627.2px;font-size:11.5px;line-height:15px;color:#444;font-weight:400;transform:scaleX(0.9690);">15</span>
<div class="a" style="left:30px;top:631.7px;width:138px;height:77.6px;background:#fff;border-radius:3px;box-shadow:0 0 1.5px rgba(0,0,0,.25)"></div>
<div class="a" style="left:30px;top:640.15px;width:39px;height:59.8px;background:#4a66ac;"></div>
<span class="t" id="t62" style="left:33.6px;top:180.5px;font-size:4px;line-height:5px;color:#fff;font-weight:700;">Типологія</span>
<span class="t" id="t63" style="left:33.6px;top:185.5px;font-size:4px;line-height:5px;color:#fff;font-weight:700;">педагогічних</span>
<span class="t" id="t64" style="left:33.6px;top:190.5px;font-size:4px;line-height:5px;color:#fff;font-weight:700;">проблеми</span>
<span class="t" id="t65" style="left:33.6px;top:272px;font-size:4px;line-height:5px;color:#fff;font-weight:700;">Рада з</span>
<span class="t" id="t66" style="left:33.6px;top:276.8px;font-size:4px;line-height:5px;color:#fff;font-weight:700;">координації</span>
<span class="t" id="t67" style="left:33.6px;top:281.6px;font-size:4px;line-height:5px;color:#fff;font-weight:700;">тем наукових</span>
<span class="t" id="t68" style="left:33.6px;top:286.4px;font-size:4px;line-height:5px;color:#fff;font-weight:700;">досліджень</span>
<span class="t" id="t69" style="left:33.6px;top:291.2px;font-size:4px;line-height:5px;color:#fff;font-weight:700;">ХНПУ імені</span>
<span class="t" id="t70" style="left:33.6px;top:296px;font-size:4px;line-height:5px;color:#fff;font-weight:700;">Г.С.Сковороди</span>
<span class="t" id="t71" style="left:33.6px;top:371.5px;font-size:4px;line-height:5px;color:#fff;font-weight:700;">Категоріаль-</span>
<span class="t" id="t72" style="left:33.6px;top:376.9px;font-size:4px;line-height:5px;color:#fff;font-weight:700;">ний апарат</span>
<span class="t" id="t73" style="left:33.6px;top:382.3px;font-size:4px;line-height:5px;color:#fff;font-weight:700;">наукових</span>
<span class="t" id="t74" style="left:33.6px;top:387.7px;font-size:4px;line-height:5px;color:#fff;font-weight:700;">досліджень</span>
<span class="t" id="t75" style="left:34.3px;top:459.4px;font-size:4.5px;line-height:6px;color:#fff;font-weight:700;">Галузь</span>
<span class="t" id="t76" style="left:34.3px;top:465.05px;font-size:4.5px;line-height:6px;color:#fff;font-weight:700;">А Освіта</span>
<span class="t" id="t77" style="left:34.3px;top:470.7px;font-size:4.5px;line-height:6px;color:#fff;font-weight:700;"></span>
<span class="t" id="t78" style="left:34.3px;top:476.35px;font-size:4.5px;line-height:6px;color:#fff;font-weight:700;">Спеціальність</span>
<span class="t" id="t79" style="left:34.3px;top:482px;font-size:4.5px;line-height:6px;color:#fff;font-weight:700;">А5</span>
<span class="t" id="t80" style="left:34.3px;top:487.65px;font-size:4.5px;line-height:6px;color:#fff;font-weight:700;">Професійна</span>
<span class="t" id="t81" style="left:34.3px;top:493.3px;font-size:4.5px;line-height:6px;color:#fff;font-weight:700;">освіта</span>
<span class="t" id="t82" style="left:34.3px;top:555.4px;font-size:4.5px;line-height:6px;color:#fff;font-weight:700;">Галузь</span>
<span class="t" id="t83" style="left:34.3px;top:561.05px;font-size:4.5px;line-height:6px;color:#fff;font-weight:700;">А Освіта</span>
<span class="t" id="t84" style="left:34.3px;top:566.7px;font-size:4.5px;line-height:6px;color:#fff;font-weight:700;"></span>
<span class="t" id="t85" style="left:34.3px;top:572.35px;font-size:4.5px;line-height:6px;color:#fff;font-weight:700;">Спеціальність</span>
<span class="t" id="t86" style="left:34.3px;top:578px;font-size:4.5px;line-height:6px;color:#fff;font-weight:700;">А5</span>
<span class="t" id="t87" style="left:34.3px;top:583.65px;font-size:4.5px;line-height:6px;color:#fff;font-weight:700;">Професійна</span>
<span class="t" id="t88" style="left:34.3px;top:589.3px;font-size:4.5px;line-height:6px;color:#fff;font-weight:700;">освіта</span>
<div class="a" style="left:82.8px;top:165.5px;width:3.4px;height:3.4px;background:#fff;border:.7px solid #4a66ac"></div>
<div class="a" style="left:82.8px;top:172px;width:3.4px;height:3.4px;background:#fff;border:.7px solid #4a66ac"></div>
<div class="a" style="left:82.8px;top:178.5px;width:3.4px;height:3.4px;background:#fff;border:.7px solid #4a66ac"></div>
<div class="a" style="left:82.8px;top:185px;width:3.4px;height:3.4px;background:#fff;border:.7px solid #4a66ac"></div>
<div class="a" style="left:82.8px;top:191.5px;width:3.4px;height:3.4px;background:#fff;border:.7px solid #4a66ac"></div>
<div class="a" style="left:82.8px;top:198px;width:3.4px;height:3.4px;background:#fff;border:.7px solid #4a66ac"></div>
<div class="a" style="left:76px;top:261px;width:14px;height:50px;background:#fafafa;border:.6px solid #bbb"></div>
<div class="a" style="left:77px;top:377px;width:12px;height:1.2px;background:#bdbdbd;"></div>
<div class="a" style="left:77px;top:381.1px;width:12px;height:1.2px;background:#bdbdbd;"></div>
<div class="a" style="left:77px;top:385.2px;width:12px;height:1.2px;background:#bdbdbd;"></div>
<div class="a" style="left:77px;top:389.3px;width:12px;height:1.2px;background:#bdbdbd;"></div>
<div class="a" style="left:77px;top:393.4px;width:12px;height:1.2px;background:#bdbdbd;"></div>
<div class="a" style="left:77px;top:397.5px;width:12px;height:1.2px;background:#bdbdbd;"></div>
<div class="a" style="left:77px;top:401.6px;width:12px;height:1.2px;background:#bdbdbd;"></div>
<div class="a" style="left:77px;top:405.7px;width:12px;height:1.2px;background:#bdbdbd;"></div>
<div class="a" style="left:77px;top:409.8px;width:12px;height:1.2px;background:#bdbdbd;"></div>
<div class="a" style="left:73px;top:448.5px;width:17px;height:8px;background:#4a66ac;"></div>
<div class="a" style="left:73px;top:456.5px;width:17px;height:52px;background:#dfe3ef;"></div>
<span class="t" id="t89" style="left:112px;top:600.6px;font-size:3px;line-height:4px;color:#777;font-weight:700;transform:scaleX(1.1060);">розгляду</span>
<div class="a" style="left:83.6px;top:552.4px;width:5px;height:2.2px;background:#3a4a7a;"></div>
<div class="a" style="left:77.5px;top:568.4px;width:11px;height:1px;background:#b5b5b5;"></div>
<div class="a" style="left:77.5px;top:571.4px;width:11px;height:1px;background:#b5b5b5;"></div>
<div class="a" style="left:77.5px;top:574.4px;width:11px;height:1px;background:#b5b5b5;"></div>
<div class="a" style="left:165px;top:640.4px;width:3px;height:18px;background:#e3e3e3;"></div>
<div class="a" style="left:30px;top:640.4px;width:39px;height:18px;background:#4a66ac;"></div>
<span class="t" id="t90" style="left:77px;top:650.4px;font-size:3px;line-height:4px;color:#444;font-weight:700;transform:scaleX(0.9174);">Мета дослідження</span>
<div class="a" style="left:104px;top:652px;width:42px;height:0.8px;background:#bbb;"></div>
<div class="a" style="left:77px;top:656px;width:70px;height:0.8px;background:#ccc;"></div>
<div class="a" style="left:204px;top:627.2px;width:1061px;height:1px;background:rgba(255,255,255,.35);"></div>
<span class="t" id="t91" style="left:211.9px;top:634.2px;font-size:12.5px;line-height:16px;color:#6a6a6a;font-weight:400;transform:scaleX(0.9453);">Нотатки до слайда</span>
<div class="a" style="left:12.4px;top:632.2px;width:27px;height:27px;background:#25282a;border-radius:50%;box-shadow:0 0 2px rgba(0,0,0,.4)"></div>
<svg style="left:0;top:0" width="1279" height="673" viewBox="0 0 1279 673"><g fill="none" stroke="#3fd08f" stroke-width="1.5" stroke-linecap="round" stroke-linejoin="round"><path d="M20.6 648.4 l1 -3.8 l7.6 -7.6 l2.8 2.8 l-7.6 7.6 z M27.4 638.8 l2.8 2.8"/><path d="M20.4 652 h12" /></g></svg>
<div class="a" style="left:0px;top:657.4px;width:1279px;height:15.6px;background:#f3f2f2;"></div>
<span class="t" id="t92" style="left:10.1px;top:660.6px;font-size:9px;line-height:12px;color:#555;font-weight:400;transform:scaleX(0.9286);">Слайд 14 з 30</span>
<span class="t" id="t93" style="left:107.7px;top:660.6px;font-size:9px;line-height:12px;color:#555;font-weight:400;transform:scaleX(0.9492);">українська</span>
<span class="t" id="t94" style="left:178.6px;top:660.6px;font-size:9px;line-height:12px;color:#222;font-weight:700;transform:scaleX(0.9558);">Спеціальні можливості: щось не так</span>
<div class="a" style="left:983px;top:658px;width:32.6px;height:15px;background:#dddddd;"></div>
<span class="t" id="t95" style="left:935px;top:660.8px;font-size:9px;line-height:12px;color:#333;font-weight:400;transform:scaleX(0.9268);">Нотатки</span>
<span class="t" id="t96" style="left:1235.4px;top:660.8px;font-size:9px;line-height:12px;color:#444;font-weight:400;transform:scaleX(0.8659);">78%</span>
<div class="a" style="left:1265.6px;top:144.5px;width:13.4px;height:483px;background:#f1f1f4;"></div>
<div class="a" style="left:1269px;top:335.3px;width:7px;height:14.2px;background:#7a7a7a;border-radius:3.5px"></div>
<svg style="left:0;top:0" width="1279" height="673" viewBox="0 0 1279 673">
<polygon points="188.7,647.5 192.5,652.5 196.3,647.5" fill="#666"/>
<polygon points="1268.9,152.5 1272.6,147.5 1276.3,152.5" fill="#555"/>
<polygon points="1269.3,574 1273,579 1276.7,574" fill="#555"/>
<polygon points="1269.3,589.9 1273,584.9 1276.7,589.9" fill="#555"/>
<polygon points="1269.3,594.9 1273,589.9 1276.7,594.9" fill="#555"/>
<polygon points="1269.3,598.9 1273,603.9 1276.7,598.9" fill="#555"/>
<polygon points="1269.3,603.9 1273,608.9 1276.7,603.9" fill="#555"/>
<g fill="none" stroke="#444" stroke-width="1.15"><path d="M81.6 661.4 h4.6 v9.6 h-4.6 z M86.2 662.4 q2.4 -1.6 5.4 -1 v5 M88 667 l4.6 4.4 M92.6 667 l-4.6 4.4"/>
<circle cx="169.6" cy="661.6" r="1.5"/><path d="M165 664.6 h9.2 M169.6 664.6 v3 l-3 4.4 M169.6 667.6 l1.4 2 M171.6 668.2 l3.4 3.6 M175 668.2 l-3.4 3.6"/>
<path d="M920.6 665.6 h12 M920.6 668.2 h12 M920.6 670.8 h12 M924 662.4 l2.6 -2.4 l2.6 2.4"/>
<rect x="993.8" y="660.8" width="11" height="9.6"/><path d="M996.2 660.8 v9.6 M998.4 663 h4.4 v3 h-4.4 z"/>
<rect x="1027.2" y="660.8" width="4.2" height="3.8"/><rect x="1034" y="660.8" width="4.2" height="3.8"/><rect x="1027.2" y="667" width="4.2" height="3.8"/><rect x="1034" y="667" width="4.2" height="3.8"/>
<path d="M1060.4 661.2 h4.4 q.8 0 .8 .8 v8.6 h-5.2 z M1070.8 661.2 h-4.4 q-.8 0 -.8 .8 v8.6 h5.2 z M1062 663.6 h2 M1062 665.8 h2 M1062 668 h2 M1067.2 663.6 h2 M1067.2 665.8 h2 M1067.2 668 h2" stroke-width=".9"/>
<path d="M1093.6 660.6 h11.2 M1094.8 660.6 v6 h8.8 v-6 M1099.2 666.6 v3.6 M1096.6 670.6 h5.2"/>
<path d="M1121 666 h6 M1131 666 h83.6 M1218.6 666 h6 M1221.6 663 v6 M1172.6 664 v4" stroke-width=".9" stroke="#777"/>
<rect x="1267.2" y="663" width="6" height="6" rx="1"/><path d="M1270.2 659.4 l-1.8 2 h3.6 z M1270.2 672.6 l-1.8 -2 h3.6 z M1263.8 666 l2 -1.8 v3.6 z M1276.6 666 l-2 -1.8 v3.6 z" fill="#444" stroke="none"/></g>
<rect x="1161.6" y="661" width="3" height="10" rx="1" fill="#555"/>
</svg>
<div class="a" style="left:87.5px;top:66.5px;width:191.5px;height:532.5px;background:#0b0b0b;border-radius:5px"></div>
<div class="a" style="left:90px;top:386px;width:187px;height:105px;background:#1a1d20;"></div>
<svg style="left:0;top:0" width="1279" height="673" viewBox="0 0 1279 673">
<defs>
<filter id="b1" x="-20%" y="-20%" width="140%" height="140%"><feGaussianBlur stdDeviation="1.6"/></filter>
<filter id="b2" x="-20%" y="-20%" width="140%" height="140%"><feGaussianBlur stdDeviation="3"/></filter>
<filter id="b3" x="-30%" y="-30%" width="160%" height="160%"><feGaussianBlur stdDeviation="5"/></filter>
<filter id="b05" x="-20%" y="-20%" width="140%" height="140%"><feGaussianBlur stdDeviation=".7"/></filter>
<filter id="b10" x="-20%" y="-20%" width="140%" height="140%"><feGaussianBlur stdDeviation="1.1"/></filter>
<clipPath id="v1"><rect x="92" y="71" width="182" height="101" rx="2"/></clipPath>
<clipPath id="v2"><rect x="90" y="176" width="187" height="104"/></clipPath>
<clipPath id="v3"><rect x="90" y="281" width="187" height="105"/></clipPath>
<clipPath id="v5"><path d="M90 491 h187 v101 q0 4 -4 4 h-179 q-4 0 -4 -4 z"/></clipPath>
</defs>
<g clip-path="url(#v1)"><rect x="92" y="71" width="182" height="101" fill="#5b5852"/>
<g filter="url(#b2)">
<rect x="88" y="66" width="31" height="88" fill="#8f877b"/>
<rect x="119" y="66" width="42" height="110" fill="#403e3d"/>
<rect x="122" y="99" width="20" height="28" fill="#8d857b"/>
<rect x="126" y="76" width="12" height="20" fill="#5e5a56"/>
<rect x="222" y="66" width="58" height="110" fill="#6a685b"/>
<rect x="236" y="80" width="20" height="62" fill="#7d7c6e"/>
<rect x="88" y="152" width="50" height="26" fill="#3b3937"/>
<rect x="258" y="120" width="22" height="60" fill="#4c4b44"/>
<rect x="88" y="66" width="190" height="5" fill="#3a3836"/>
</g>
<g filter="url(#b1)">
<path d="M134 176 q8 -30 34 -40 h50 q30 6 52 40 z" fill="#c4c3c1"/>
<path d="M218 140 q26 8 48 34 h-30 z" fill="#b4bbc9"/>
<path d="M158 116 q-2 -42 32 -43 q30 1 30 36 q0 16 -6 24 l-50 2 q-5 -6 -6 -19 z" fill="#9d9077"/>
<path d="M196 74 q24 2 24 36 q0 14 -5 22 l-10 -30 z" fill="#73675a"/>
<path d="M169 102 q2 -14 22 -15 q20 1 22 18 q2 18 -5 30 q-7 10 -17 10 q-12 0 -18 -11 q-5 -12 -4 -32 z" fill="#87766a"/>
<path d="M178 138 h26 l4 8 q-16 9 -34 0 z" fill="#7b6a60"/>
<ellipse cx="192" cy="126" rx="8" ry="2.6" fill="#5a4640"/>
</g>
<g filter="url(#b05)"><ellipse cx="181.5" cy="107.4" rx="6.4" ry="4" fill="#3b2ff2"/><ellipse cx="200.4" cy="107.4" rx="7.4" ry="4.2" fill="#3b2ff2"/><ellipse cx="181.5" cy="108" rx="3.8" ry="2" fill="#6a63ff"/><ellipse cx="200.4" cy="108" rx="4.2" ry="2" fill="#6a63ff"/></g>
</g>
<g clip-path="url(#v2)"><rect x="90" y="176" width="187" height="104" fill="#ecdccd"/>
<g filter="url(#b10)">
<rect x="88" y="174" width="33" height="110" fill="#f2e8e1"/><rect x="107" y="174" width="4" height="110" fill="#e4d6cb"/><rect x="90" y="174" width="2" height="110" fill="#fbf8f5"/>
<rect x="152" y="228" width="33" height="34" fill="#f8f5f2"/><rect x="186" y="236" width="40" height="20" fill="#f3ece6"/>
<rect x="234" y="194" width="46" height="26" fill="#d9ccbe"/>
<rect x="235.6" y="197" width="16" height="18" fill="#2e2a2a"/><rect x="238" y="200" width="11" height="10" fill="#8a7a6a"/>
<rect x="252" y="195" width="5" height="24" fill="#3a302c"/><rect x="257" y="198" width="5" height="21" fill="#5a4a42"/><rect x="262" y="200" width="5" height="19" fill="#e3d8cc"/><rect x="267" y="197" width="4" height="22" fill="#a13a32"/><rect x="271" y="201" width="7" height="18" fill="#5c4034"/>
<rect x="232" y="219.6" width="48" height="2.6" fill="#6e4f3c"/>
<rect x="250" y="223" width="30" height="33" fill="#cdbfae"/>
<rect x="252" y="228" width="4" height="27" fill="#8c3a32"/><rect x="256" y="226" width="5" height="29" fill="#b5483e"/><rect x="261" y="229" width="5" height="26" fill="#e6dccf"/><rect x="266" y="225" width="6" height="30" fill="#6a4a3a"/><rect x="272" y="230" width="6" height="25" fill="#c2a58a"/>
<rect x="181" y="246" width="14" height="10" fill="#7a4a3e"/>
<rect x="180" y="255.6" width="100" height="3" fill="#6e4f3c"/>
<rect x="196" y="258.6" width="84" height="24" fill="#e6ded6"/><rect x="241" y="267" width="9" height="14" fill="none" stroke="#2e2a28" stroke-width="1.6"/><rect x="252" y="273.6" width="28" height="8" fill="#8d8782"/>
<ellipse cx="186.0" cy="176.8" rx="3.1" ry="2.8" transform="rotate(-18 186.0 176.8)" fill="#3f5a26"/>
<ellipse cx="218.9" cy="185.9" rx="3.8" ry="2.3" transform="rotate(7 218.9 185.9)" fill="#3f5a26"/>
<ellipse cx="214.6" cy="181.0" rx="4.3" ry="3.3" transform="rotate(10 214.6 181.0)" fill="#2c4420"/>
<ellipse cx="168.4" cy="187.8" rx="3.3" ry="2.6" transform="rotate(5 168.4 187.8)" fill="#64803c"/>
<ellipse cx="182.2" cy="189.1" rx="4.2" ry="2.9" transform="rotate(-17 182.2 189.1)" fill="#64803c"/>
<ellipse cx="209.9" cy="185.2" rx="4.0" ry="2.7" transform="rotate(38 209.9 185.2)" fill="#2c4420"/>
<ellipse cx="200.1" cy="180.7" rx="4.6" ry="3.0" transform="rotate(-35 200.1 180.7)" fill="#64803c"/>
<ellipse cx="182.7" cy="183.6" rx="3.9" ry="2.9" transform="rotate(-59 182.7 183.6)" fill="#64803c"/>
<ellipse cx="188.8" cy="186.1" rx="4.0" ry="2.1" transform="rotate(23 188.8 186.1)" fill="#64803c"/>
<ellipse cx="199.4" cy="188.1" rx="4.4" ry="2.8" transform="rotate(11 199.4 188.1)" fill="#2c4420"/>
<ellipse cx="167.9" cy="184.7" rx="4.4" ry="2.1" transform="rotate(32 167.9 184.7)" fill="#4e6a2e"/>
<ellipse cx="207.1" cy="191.3" rx="3.6" ry="2.5" transform="rotate(23 207.1 191.3)" fill="#3f5a26"/>
<ellipse cx="224.0" cy="189.8" rx="4.0" ry="2.3" transform="rotate(-29 224.0 189.8)" fill="#3a5524"/>
<ellipse cx="182.6" cy="183.2" rx="3.2" ry="2.6" transform="rotate(6 182.6 183.2)" fill="#35501f"/>
<ellipse cx="214.5" cy="194.0" rx="3.8" ry="2.5" transform="rotate(53 214.5 194.0)" fill="#35501f"/>
<ellipse cx="172.7" cy="182.8" rx="3.5" ry="2.7" transform="rotate(12 172.7 182.8)" fill="#4e6a2e"/>
<ellipse cx="182.7" cy="177.8" rx="4.2" ry="2.4" transform="rotate(-52 182.7 177.8)" fill="#64803c"/>
<ellipse cx="225.4" cy="195.6" rx="3.9" ry="3.2" transform="rotate(63 225.4 195.6)" fill="#3a5524"/>
<ellipse cx="213.9" cy="184.8" rx="3.2" ry="2.9" transform="rotate(-61 213.9 184.8)" fill="#3f5a26"/>
<ellipse cx="223.7" cy="193.3" rx="4.2" ry="2.1" transform="rotate(9 223.7 193.3)" fill="#64803c"/>
<ellipse cx="168.4" cy="188.2" rx="4.7" ry="2.9" transform="rotate(-49 168.4 188.2)" fill="#4e6a2e"/>
<ellipse cx="224.1" cy="194.9" rx="3.2" ry="2.7" transform="rotate(66 224.1 194.9)" fill="#2c4420"/>
<ellipse cx="192.6" cy="173.6" rx="3.7" ry="2.4" transform="rotate(46 192.6 173.6)" fill="#35501f"/>
<ellipse cx="199.7" cy="175.7" rx="3.7" ry="3.0" transform="rotate(57 199.7 175.7)" fill="#64803c"/>
<ellipse cx="181.0" cy="186.3" rx="4.7" ry="2.7" transform="rotate(57 181.0 186.3)" fill="#4e6a2e"/>
<ellipse cx="214.5" cy="186.4" rx="3.7" ry="2.3" transform="rotate(43 214.5 186.4)" fill="#35501f"/>
<ellipse cx="216.4" cy="192.7" rx="3.5" ry="2.7" transform="rotate(-20 216.4 192.7)" fill="#3f5a26"/>
<ellipse cx="226.2" cy="199.8" rx="3.4" ry="2.8" transform="rotate(-21 226.2 199.8)" fill="#3a5524"/>
<ellipse cx="225.4" cy="202.7" rx="3.4" ry="2.3" transform="rotate(-42 225.4 202.7)" fill="#35501f"/>
<ellipse cx="195.6" cy="189.8" rx="3.0" ry="3.3" transform="rotate(-21 195.6 189.8)" fill="#3a5524"/>
<ellipse cx="172.7" cy="194.2" rx="4.6" ry="3.1" transform="rotate(-3 172.7 194.2)" fill="#35501f"/>
<ellipse cx="189.4" cy="183.7" rx="4.9" ry="3.0" transform="rotate(-5 189.4 183.7)" fill="#3a5524"/>
<ellipse cx="221.7" cy="196.7" rx="3.3" ry="2.2" transform="rotate(56 221.7 196.7)" fill="#3a5524"/>
<ellipse cx="176.9" cy="194.7" rx="4.3" ry="2.5" transform="rotate(6 176.9 194.7)" fill="#35501f"/>
<ellipse cx="167.7" cy="199.4" rx="3.2" ry="3.0" transform="rotate(-50 167.7 199.4)" fill="#35501f"/>
<ellipse cx="214.7" cy="182.5" rx="3.6" ry="2.3" transform="rotate(12 214.7 182.5)" fill="#4e6a2e"/>
<ellipse cx="196.1" cy="187.2" rx="4.5" ry="3.3" transform="rotate(22 196.1 187.2)" fill="#64803c"/>
<ellipse cx="191.1" cy="189.0" rx="4.1" ry="2.7" transform="rotate(-67 191.1 189.0)" fill="#2c4420"/>
<ellipse cx="214.8" cy="187.9" rx="3.3" ry="2.2" transform="rotate(16 214.8 187.9)" fill="#3f5a26"/>
<ellipse cx="199.6" cy="178.1" rx="4.1" ry="3.1" transform="rotate(-55 199.6 178.1)" fill="#64803c"/>
<ellipse cx="165.8" cy="187.0" rx="3.2" ry="2.6" transform="rotate(-66 165.8 187.0)" fill="#3f5a26"/>
<ellipse cx="192.5" cy="183.2" rx="4.0" ry="3.0" transform="rotate(-6 192.5 183.2)" fill="#64803c"/>
<ellipse cx="213.5" cy="187.2" rx="4.0" ry="3.2" transform="rotate(59 213.5 187.2)" fill="#64803c"/>
<ellipse cx="220.0" cy="185.0" rx="3.8" ry="2.5" transform="rotate(-25 220.0 185.0)" fill="#3a5524"/>
<ellipse cx="180.9" cy="177.7" rx="4.6" ry="3.3" transform="rotate(-48 180.9 177.7)" fill="#3a5524"/>
<ellipse cx="203.4" cy="180.0" rx="3.3" ry="2.7" transform="rotate(34 203.4 180.0)" fill="#3f5a26"/>
<ellipse cx="181.6" cy="211.1" rx="5.0" ry="3.2" transform="rotate(-47 181.6 211.1)" fill="#2c4420"/>
<ellipse cx="183.4" cy="233.8" rx="3.8" ry="2.5" transform="rotate(-57 183.4 233.8)" fill="#4e6a2e"/>
<ellipse cx="180.8" cy="196.7" rx="3.9" ry="2.0" transform="rotate(-23 180.8 196.7)" fill="#64803c"/>
<ellipse cx="190.9" cy="207.2" rx="3.2" ry="3.3" transform="rotate(-38 190.9 207.2)" fill="#3f5a26"/>
<ellipse cx="175.2" cy="199.2" rx="4.8" ry="2.3" transform="rotate(35 175.2 199.2)" fill="#2c4420"/>
<ellipse cx="188.3" cy="228.3" rx="4.9" ry="2.6" transform="rotate(5 188.3 228.3)" fill="#64803c"/>
<ellipse cx="187.1" cy="217.7" rx="3.2" ry="2.1" transform="rotate(26 187.1 217.7)" fill="#2c4420"/>
<ellipse cx="180.0" cy="230.0" rx="3.0" ry="2.1" transform="rotate(-33 180.0 230.0)" fill="#64803c"/>
<ellipse cx="175.5" cy="228.5" rx="4.7" ry="2.6" transform="rotate(-22 175.5 228.5)" fill="#64803c"/>
<ellipse cx="190.7" cy="211.9" rx="4.2" ry="2.1" transform="rotate(29 190.7 211.9)" fill="#3f5a26"/>
<ellipse cx="180.3" cy="232.8" rx="3.4" ry="3.3" transform="rotate(18 180.3 232.8)" fill="#64803c"/>
<ellipse cx="179.6" cy="224.9" rx="4.0" ry="2.2" transform="rotate(-21 179.6 224.9)" fill="#3f5a26"/>
<ellipse cx="175.7" cy="233.8" rx="3.0" ry="2.7" transform="rotate(66 175.7 233.8)" fill="#64803c"/>
<ellipse cx="191.5" cy="214.0" rx="3.2" ry="3.1" transform="rotate(-9 191.5 214.0)" fill="#2c4420"/>
<ellipse cx="190.9" cy="216.7" rx="4.9" ry="2.4" transform="rotate(-39 190.9 216.7)" fill="#35501f"/>
<ellipse cx="188.5" cy="209.0" rx="4.4" ry="2.9" transform="rotate(-13 188.5 209.0)" fill="#4e6a2e"/>
<ellipse cx="192.5" cy="233.3" rx="3.0" ry="2.9" transform="rotate(53 192.5 233.3)" fill="#2c4420"/>
<ellipse cx="171.8" cy="202.2" rx="4.7" ry="3.2" transform="rotate(23 171.8 202.2)" fill="#4e6a2e"/>
<ellipse cx="187.1" cy="218.8" rx="3.1" ry="2.3" transform="rotate(-32 187.1 218.8)" fill="#3f5a26"/>
<ellipse cx="190.8" cy="206.0" rx="4.9" ry="2.8" transform="rotate(-35 190.8 206.0)" fill="#4e6a2e"/>
<ellipse cx="174.1" cy="204.3" rx="3.7" ry="2.1" transform="rotate(-30 174.1 204.3)" fill="#3a5524"/>
<ellipse cx="180.8" cy="203.6" rx="3.0" ry="2.4" transform="rotate(-57 180.8 203.6)" fill="#2c4420"/>
<ellipse cx="162.3" cy="213.7" rx="4.3" ry="2.1" transform="rotate(64 162.3 213.7)" fill="#35501f"/>
<ellipse cx="165.8" cy="220.1" rx="3.8" ry="2.5" transform="rotate(67 165.8 220.1)" fill="#35501f"/>
<ellipse cx="157.0" cy="204.5" rx="4.6" ry="3.0" transform="rotate(1 157.0 204.5)" fill="#2c4420"/>
<ellipse cx="168.0" cy="216.2" rx="4.0" ry="2.7" transform="rotate(46 168.0 216.2)" fill="#3f5a26"/>
<ellipse cx="168.7" cy="224.6" rx="4.4" ry="3.0" transform="rotate(-37 168.7 224.6)" fill="#3f5a26"/>
<ellipse cx="151.7" cy="204.8" rx="3.8" ry="2.6" transform="rotate(-62 151.7 204.8)" fill="#3f5a26"/>
<ellipse cx="164.9" cy="216.2" rx="3.0" ry="3.1" transform="rotate(34 164.9 216.2)" fill="#64803c"/>
<ellipse cx="167.3" cy="223.6" rx="4.5" ry="2.7" transform="rotate(43 167.3 223.6)" fill="#4e6a2e"/>
<ellipse cx="156.7" cy="204.0" rx="4.3" ry="2.6" transform="rotate(48 156.7 204.0)" fill="#3f5a26"/>
<ellipse cx="161.6" cy="214.6" rx="4.2" ry="2.9" transform="rotate(-59 161.6 214.6)" fill="#35501f"/>
<ellipse cx="158.2" cy="210.2" rx="4.2" ry="2.2" transform="rotate(-2 158.2 210.2)" fill="#2c4420"/>
<ellipse cx="156.9" cy="208.5" rx="4.4" ry="2.4" transform="rotate(2 156.9 208.5)" fill="#2c4420"/>
<ellipse cx="161.9" cy="216.1" rx="4.1" ry="2.4" transform="rotate(-57 161.9 216.1)" fill="#2c4420"/>
<ellipse cx="150.1" cy="203.0" rx="4.9" ry="2.6" transform="rotate(-32 150.1 203.0)" fill="#35501f"/>
<path d="M143.5 192 q-5 40 -6 88" fill="none" stroke="#5d5030" stroke-width="1.6"/>
<ellipse cx="147.0" cy="269.0" rx="3.1" ry="2.1" transform="rotate(34 147.0 269.0)" fill="#4e6a2e"/>
<ellipse cx="130.9" cy="272.0" rx="4.6" ry="2.7" transform="rotate(54 130.9 272.0)" fill="#3a5524"/>
<ellipse cx="141.1" cy="222.7" rx="4.8" ry="2.6" transform="rotate(-47 141.1 222.7)" fill="#2c4420"/>
<ellipse cx="137.7" cy="249.3" rx="4.5" ry="2.6" transform="rotate(-17 137.7 249.3)" fill="#3f5a26"/>
<ellipse cx="128.8" cy="262.6" rx="4.5" ry="3.2" transform="rotate(-53 128.8 262.6)" fill="#35501f"/>
<ellipse cx="147.5" cy="251.9" rx="3.6" ry="2.5" transform="rotate(-14 147.5 251.9)" fill="#64803c"/>
<ellipse cx="151.1" cy="198.4" rx="4.5" ry="3.2" transform="rotate(-30 151.1 198.4)" fill="#3f5a26"/>
<ellipse cx="134.5" cy="262.1" rx="4.9" ry="2.3" transform="rotate(-32 134.5 262.1)" fill="#64803c"/>
<ellipse cx="146.9" cy="218.5" rx="4.6" ry="2.6" transform="rotate(-65 146.9 218.5)" fill="#3a5524"/>
<ellipse cx="148.5" cy="225.6" rx="4.1" ry="2.3" transform="rotate(-58 148.5 225.6)" fill="#3a5524"/>
<ellipse cx="143.2" cy="226.5" rx="3.3" ry="3.2" transform="rotate(-2 143.2 226.5)" fill="#64803c"/>
<ellipse cx="141.8" cy="202.7" rx="3.7" ry="2.4" transform="rotate(33 141.8 202.7)" fill="#3a5524"/>
<ellipse cx="144.8" cy="213.9" rx="3.6" ry="2.8" transform="rotate(-14 144.8 213.9)" fill="#35501f"/>
<ellipse cx="131.3" cy="246.0" rx="4.0" ry="3.1" transform="rotate(7 131.3 246.0)" fill="#2c4420"/>
<ellipse cx="148.4" cy="268.1" rx="3.9" ry="2.2" transform="rotate(-43 148.4 268.1)" fill="#3f5a26"/>
<ellipse cx="143.2" cy="206.7" rx="3.6" ry="2.5" transform="rotate(43 143.2 206.7)" fill="#35501f"/>
<ellipse cx="143.6" cy="266.5" rx="3.8" ry="2.6" transform="rotate(3 143.6 266.5)" fill="#2c4420"/>
<ellipse cx="146.7" cy="214.7" rx="4.0" ry="2.8" transform="rotate(-19 146.7 214.7)" fill="#3a5524"/>
<ellipse cx="143.1" cy="234.3" rx="4.7" ry="2.3" transform="rotate(-32 143.1 234.3)" fill="#35501f"/>
<ellipse cx="144.0" cy="224.3" rx="3.9" ry="2.4" transform="rotate(44 144.0 224.3)" fill="#3f5a26"/>
<ellipse cx="140.9" cy="202.7" rx="4.5" ry="3.1" transform="rotate(65 140.9 202.7)" fill="#2c4420"/>
<ellipse cx="140.8" cy="192.0" rx="4.9" ry="3.2" transform="rotate(49 140.8 192.0)" fill="#2c4420"/>
<ellipse cx="133.9" cy="212.9" rx="3.3" ry="2.7" transform="rotate(25 133.9 212.9)" fill="#3a5524"/>
<ellipse cx="146.4" cy="250.9" rx="4.8" ry="2.1" transform="rotate(38 146.4 250.9)" fill="#3f5a26"/>
<ellipse cx="133.7" cy="257.7" rx="4.8" ry="2.9" transform="rotate(-27 133.7 257.7)" fill="#35501f"/>
<ellipse cx="140.4" cy="244.6" rx="3.9" ry="3.1" transform="rotate(-56 140.4 244.6)" fill="#4e6a2e"/>
<ellipse cx="142.0" cy="236.1" rx="3.8" ry="2.3" transform="rotate(14 142.0 236.1)" fill="#3f5a26"/>
<ellipse cx="150.2" cy="237.1" rx="3.6" ry="2.4" transform="rotate(47 150.2 237.1)" fill="#35501f"/>
<ellipse cx="135.3" cy="231.9" rx="3.5" ry="3.3" transform="rotate(28 135.3 231.9)" fill="#4e6a2e"/>
<ellipse cx="136.6" cy="196.6" rx="4.8" ry="2.9" transform="rotate(-58 136.6 196.6)" fill="#35501f"/>
<ellipse cx="148.2" cy="248.1" rx="3.5" ry="2.0" transform="rotate(-22 148.2 248.1)" fill="#2c4420"/>
<ellipse cx="139.1" cy="222.4" rx="3.0" ry="2.4" transform="rotate(48 139.1 222.4)" fill="#3f5a26"/>
<ellipse cx="151.4" cy="209.2" rx="3.6" ry="3.1" transform="rotate(-37 151.4 209.2)" fill="#35501f"/>
<ellipse cx="149.5" cy="214.3" rx="3.2" ry="2.9" transform="rotate(15 149.5 214.3)" fill="#35501f"/>
<ellipse cx="148.8" cy="232.7" rx="3.1" ry="2.8" transform="rotate(59 148.8 232.7)" fill="#3f5a26"/>
<ellipse cx="151.4" cy="209.9" rx="3.3" ry="2.1" transform="rotate(-61 151.4 209.9)" fill="#2c4420"/>
<path d="M188 284 q4 -20 18 -22 h22 q16 2 22 22 z" fill="#2a2523"/>
<rect x="184.4" y="217" width="8.4" height="37" rx="4" fill="#1c1a1a"/><rect x="240.4" y="214" width="11" height="39" rx="5" fill="#1c1a1a"/>
<ellipse cx="217" cy="226" rx="25.6" ry="31.4" fill="#241e1c"/>
<path d="M193.6 232 q-1 -22 23.4 -23 q23.4 1 23 23 q0 22 -7 34 q-7 10 -16 10 q-9 0 -16 -10 q-7 -12 -7.4 -34 z" fill="#8b6a58"/>
<path d="M194.6 250 q3 5 8 4 q6 -4 14 -4 q9 0 14.4 4 q5 1 8 -4 q-1 16 -7 24 q-6 8 -15.4 8 q-9 0 -15 -8 q-6 -8 -7 -24 z" fill="#2a211e"/>
<path d="M193.6 222 q1 -16 23.4 -17 q22 1 23.4 17 q-9 -9 -23.4 -9 q-14 0 -23.4 9 z" fill="#211b1a"/>
<ellipse cx="207" cy="235" rx="5" ry="2.4" fill="#4a3228"/><ellipse cx="228" cy="235" rx="5" ry="2.4" fill="#4a3228"/><path d="M216 238 l-2 10 h7 z" fill="#7a5a4a"/>
</g></g>
<g clip-path="url(#v3)"><rect x="90" y="281" width="187" height="105" fill="#e7e7e8"/>
<ellipse cx="237" cy="322" rx="30" ry="34" fill="#f6f6f6" filter="url(#b3)"/>
<g filter="url(#b10)">
<rect x="146" y="279" width="134" height="11.6" fill="#d6d4d1"/>
<rect x="156" y="292" width="1" height="72" fill="#dcdcde"/>
<rect x="164" y="292" width="1" height="72" fill="#dcdcde"/>
<rect x="172" y="292" width="1" height="72" fill="#dcdcde"/>
<rect x="180" y="292" width="1" height="72" fill="#dcdcde"/>
<rect x="188" y="292" width="1" height="72" fill="#dcdcde"/>
<rect x="196" y="292" width="1" height="72" fill="#dcdcde"/>
<rect x="204" y="292" width="1" height="72" fill="#dcdcde"/>
<rect x="212" y="292" width="1" height="72" fill="#dcdcde"/>
<rect x="220" y="292" width="1" height="72" fill="#dcdcde"/>
<rect x="228" y="292" width="1" height="72" fill="#dcdcde"/>
<rect x="236" y="292" width="1" height="72" fill="#dcdcde"/>
<rect x="244" y="292" width="1" height="72" fill="#dcdcde"/>
<rect x="252" y="292" width="1" height="72" fill="#dcdcde"/>
<rect x="260" y="292" width="1" height="72" fill="#dcdcde"/>
<rect x="268" y="292" width="1" height="72" fill="#dcdcde"/>
<rect x="276" y="292" width="1" height="72" fill="#dcdcde"/>
<rect x="88" y="279" width="56" height="110" fill="#eef3f9"/><rect x="88" y="279" width="8" height="110" fill="#bfcbd8"/><rect x="112" y="279" width="5" height="110" fill="#dfe7f0"/><rect x="132" y="279" width="6" height="110" fill="#cdd7e2"/><rect x="140" y="279" width="5" height="110" fill="#dde3ea"/>
<rect x="148" y="340" width="17" height="26" fill="#c6c6ca"/>
<rect x="143.4" y="285" width="4" height="50" fill="#8a3a2c"/><rect x="147.4" y="287" width="2.8" height="44" fill="#56586e"/>
<rect x="161.2" y="294" width="3.8" height="30" fill="#38281f"/><path d="M154.6 330 q-3.4 -9 4 -12.6 q8.6 -2.4 11 4 q1.4 5 -1 8 q3.4 7 -1 10.6 q-9 3.6 -14 -1 q-3 -4.6 1 -9 z" fill="#d9983a"/><circle cx="162.6" cy="332.6" r="2.4" fill="#6b4424"/><rect x="157" y="336.6" width="9" height="1.6" fill="#5a3a22"/>
<rect x="243.6" y="365" width="36" height="24" fill="#2f2e2c"/><rect x="146" y="363.4" width="20" height="24" fill="#2b2b2b"/>
<path d="M207 388 q2 -24 18 -31 q12 -2 18 8 q8 12 11 23 z" fill="#e2ae20"/>
<rect x="204.6" y="334" width="11.4" height="32.6" rx="5" fill="#a3242c"/><rect x="207" y="339" width="7.4" height="24" rx="3.4" fill="#261f20"/><rect x="210" y="336" width="4" height="8" rx="2" fill="#e8b0b4"/>
<path d="M162.4 366 q-2 -42 24 -44 q22 0 23 30 l-4 14 z" fill="#1f1a1c"/>
<path d="M169.8 352 q3 -10 18 -10 q14 0 17 10 q1 18 -4 28 q-5 8 -13 8 q-9 0 -14 -8 q-5 -10 -4 -28 z" fill="#c9a58f"/>
<path d="M166 352 q6 -16 22 -16 q14 1 18 14 q-10 -8 -20 -5 q-12 1 -20 7 z" fill="#1f1a1c"/>
<path d="M210 366 q2 10 -9 12" fill="none" stroke="#222" stroke-width="1.4"/><ellipse cx="200" cy="378.4" rx="3.2" ry="2.6" fill="#1c1c1c"/>
<ellipse cx="179.6" cy="358.6" rx="4" ry="1.5" fill="#4a352c"/><ellipse cx="195.6" cy="358.6" rx="4" ry="1.5" fill="#4a352c"/><path d="M187 362 l-2 8 h5 z" fill="#b8927c"/>
</g></g>
<g clip-path="url(#v5)"><rect x="90" y="491" width="187" height="105" fill="#8d8e86"/>
<g filter="url(#b3)">
<rect x="80" y="485" width="200" height="12" fill="#a2a39c"/>
<rect x="80" y="499" width="200" height="30" fill="#787972"/>
<rect x="80" y="540" width="58" height="44" fill="#acaca4"/>
<rect x="238" y="505" width="50" height="60" fill="#9b9c93"/>
</g><g filter="url(#b2)">
<ellipse cx="162" cy="503" rx="4.6" ry="4" fill="#45453f"/>
<rect x="134" y="558" width="40" height="30" fill="#353430"/>
<path d="M138 602 q8 -28 40 -30 h40 q24 2 32 30 z" fill="#8c1b2d"/>
<ellipse cx="197.6" cy="527" rx="19.6" ry="13" fill="#8a6a53"/>
<ellipse cx="197.6" cy="549" rx="20" ry="28" fill="#d0a693"/>
<rect x="186" y="568" width="24" height="14" fill="#c59d88"/>
<ellipse cx="243" cy="554" rx="16" ry="12.6" fill="#d9ab9a"/>
<path d="M232 560 q16 6 26 -4 q8 16 16 40 h-26 q-6 -22 -16 -36 z" fill="#d0a28e"/>
<ellipse cx="189" cy="545" rx="4.4" ry="1.8" fill="#8a6656"/><ellipse cx="206" cy="545" rx="4.4" ry="1.8" fill="#8a6656"/><ellipse cx="197.6" cy="566" rx="6" ry="1.6" fill="#a87868"/>
</g></g>
</svg>
<div class="a" style="left:89px;top:68px;width:188px;height:107px;background:transparent;border:3px solid #2fd387;box-sizing:border-box;border-radius:5px"></div>
<div class="a" style="left:150.3px;top:405px;width:66.5px;height:66.8px;background:#5c6ac9;border-radius:8px"></div>
<span class="t" id="t97" style="left:172.2px;top:414.6px;font-size:37px;line-height:48px;color:#fff;font-weight:400;transform:scaleX(0.9195);">V</span>
<div class="a" style="left:92.6px;top:157.6px;width:101.1px;height:15.3px;background:rgba(48,48,48,.78);border-radius:0 3px 0 0"></div>
<span class="t" id="t98" style="left:96px;top:158.2px;font-size:10.5px;line-height:14px;color:#f2f2f2;font-weight:400;transform:scaleX(0.9819);">Nataliia Ponomarova</span>
<div class="a" style="left:92.6px;top:262.6px;width:103.1px;height:15.8px;background:rgba(48,48,48,.78);border-radius:3px"></div>
<span class="t" id="t99" style="left:111.6px;top:264.2px;font-size:10.5px;line-height:14px;color:#f2f2f2;font-weight:400;transform:scaleX(0.9630);">Яворський Петро</span>
<svg style="left:0;top:0" width="1279" height="673" viewBox="0 0 1279 673"><g fill="none" stroke="#e8443c" stroke-width="1.1" stroke-linecap="round"><rect x="98.6" y="265.5" width="3" height="5.6" rx="1.5" fill="#e8443c"/><path d="M96.8 270.5 q0 3.2 3.3 3.2 q3.3 0 3.3 -3.2 M100.1 273.7 v1.8 M96.6 275.1 l7 -8.6"/></g></svg>
<div class="a" style="left:92.6px;top:367.7px;width:87.7px;height:16px;background:rgba(48,48,48,.78);border-radius:3px"></div>
<span class="t" id="t100" style="left:110.7px;top:369.2px;font-size:10.5px;line-height:14px;color:#f2f2f2;font-weight:400;transform:scaleX(0.9860);">Viktor Yesman</span>
<svg style="left:0;top:0" width="1279" height="673" viewBox="0 0 1279 673"><g fill="none" stroke="#e8443c" stroke-width="1.1" stroke-linecap="round"><rect x="98.6" y="370.7" width="3" height="5.6" rx="1.5" fill="#e8443c"/><path d="M96.8 375.7 q0 3.2 3.3 3.2 q3.3 0 3.3 -3.2 M100.1 378.9 v1.8 M96.6 380.3 l7 -8.6"/></g></svg>
<div class="a" style="left:92.6px;top:473.6px;width:120.4px;height:14.4px;background:rgba(40,42,44,.9);border-radius:3px"></div>
<span class="t" id="t101" style="left:110.7px;top:474.2px;font-size:10.5px;line-height:14px;color:#f2f2f2;font-weight:400;transform:scaleX(0.9743);">Vladyslav Saratovskyi</span>
<svg style="left:0;top:0" width="1279" height="673" viewBox="0 0 1279 673"><g fill="none" stroke="#e8443c" stroke-width="1.1" stroke-linecap="round"><rect x="98.6" y="475.8" width="3" height="5.6" rx="1.5" fill="#e8443c"/><path d="M96.8 480.8 q0 3.2 3.3 3.2 q3.3 0 3.3 -3.2 M100.1 484 v1.8 M96.6 485.4 l7 -8.6"/></g></svg>
<div class="a" style="left:92.6px;top:578.4px;width:103.7px;height:14.8px;background:rgba(48,48,48,.78);border-radius:3px"></div>
<span class="t" id="t102" style="left:111px;top:579.8px;font-size:10.5px;line-height:14px;color:#f2f2f2;font-weight:400;transform:scaleX(0.9749);">Руслан Дудченко</span>
<svg style="left:0;top:0" width="1279" height="673" viewBox="0 0 1279 673"><g fill="none" stroke="#e8443c" stroke-width="1.1" stroke-linecap="round"><rect x="98.6" y="580.8" width="3" height="5.6" rx="1.5" fill="#e8443c"/><path d="M96.8 585.8 q0 3.2 3.3 3.2 q3.3 0 3.3 -3.2 M100.1 589 v1.8 M96.6 590.4 l7 -8.6"/></g></svg>
</body></html>
